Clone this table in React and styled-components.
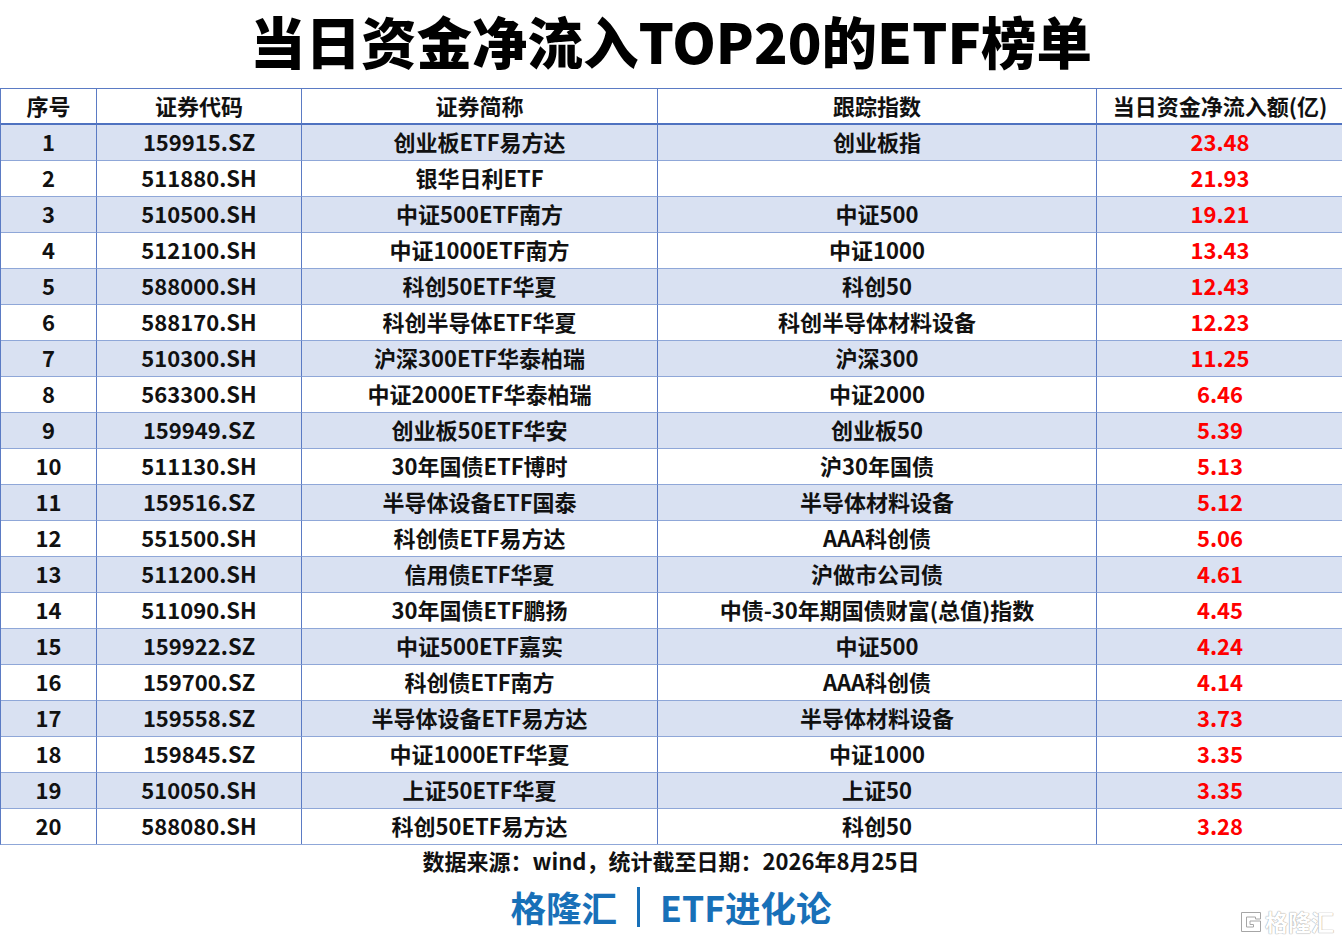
import React from "react";
import styled, { createGlobalStyle } from "styled-components";

const Global = createGlobalStyle`
  html, body { margin: 0; padding: 0; background: #ffffff; }
  body { font-family: "Noto Sans CJK SC", "Noto Sans", sans-serif; }
`;

const Page = styled.div`
  width: 1342px;
  height: 941px;
  background: #fff;
  display: flex;
  flex-direction: column;
  position: relative;
  overflow: hidden;
`;

const Title = styled.h1`
  margin: 0;
  height: 88px;
  padding-bottom: 6px;
  box-sizing: border-box;
  display: flex;
  align-items: center;
  justify-content: center;
  font-family: "Noto Sans CJK SC", sans-serif;
  font-weight: 900;
  font-size: 55.5px;
  line-height: 1;
  color: #000;
`;

const Table = styled.div`
  display: grid;
  grid-template-columns: 95px 205px 356px 439px 247px;
  border-top: 1.5px solid #5b7bc4;
  border-left: 1px solid #5b7bc4;
  border-right: 1px solid #5b7bc4;
  border-bottom: 1px solid #8fa7d8;
  box-sizing: border-box;
  width: 1342px;
`;

const HeadCell = styled.div`
  height: 36px;
  padding-bottom: 3px;
  box-sizing: border-box;
  display: flex;
  align-items: center;
  justify-content: center;
  font-size: 22px;
  font-weight: 700;
  line-height: 1;
  color: #111;
  border-bottom: 2px solid #4f72c0;
  border-left: ${p => (p.$first ? "none" : "1px solid #5b7bc4")};
  background: #fff;
`;

const Cell = styled.div`
  height: ${p => (p.$topless ? "35px" : "36px")};
  padding-bottom: 3px;
  box-sizing: border-box;
  display: flex;
  align-items: center;
  justify-content: center;
  font-size: 22px;
  font-weight: 700;
  line-height: 1;
  color: ${p => (p.$red ? "#ff0000" : "#111")};
  background: ${p => (p.$alt ? "#d9e1f2" : "#ffffff")};
  border-top: ${p => (p.$topless ? "none" : "1px solid #8fa7d8")};
  border-left: ${p => (p.$first ? "none" : "1px solid #5b7bc4")};
  white-space: nowrap;
`;

const Source = styled.div`
  height: 34px;
  padding-bottom: 4px;
  box-sizing: border-box;
  display: flex;
  align-items: center;
  justify-content: center;
  font-size: 22px;
  font-weight: 700;
  line-height: 1;
  color: #111;
`;

const Brand = styled.div`
  display: flex;
  align-items: center;
  justify-content: center;
  gap: 14px;
  height: 56px;
  font-size: 35.5px;
  font-weight: 700;
  line-height: 1;
  color: #1870b8;
`;

const BrandBar = styled.span`
  display: inline-block;
  width: 3px;
  height: 40px;
  background: #1870b8;
  margin: 0 6px;
`;

const Watermark = styled.div`
  position: absolute;
  right: 8px;
  bottom: 8px;
  display: flex;
  align-items: center;
  gap: 3px;
  font-size: 23px;
  font-weight: 700;
  line-height: 1;
  color: #ffffff;
  text-shadow: 0 0 1px #a0a0a0, 0 0 1px #a0a0a0;
`;

const rows = [
  ["1", "159915.SZ", "创业板ETF易方达", "创业板指", "23.48"],
  ["2", "511880.SH", "银华日利ETF", "", "21.93"],
  ["3", "510500.SH", "中证500ETF南方", "中证500", "19.21"],
  ["4", "512100.SH", "中证1000ETF南方", "中证1000", "13.43"],
  ["5", "588000.SH", "科创50ETF华夏", "科创50", "12.43"],
  ["6", "588170.SH", "科创半导体ETF华夏", "科创半导体材料设备", "12.23"],
  ["7", "510300.SH", "沪深300ETF华泰柏瑞", "沪深300", "11.25"],
  ["8", "563300.SH", "中证2000ETF华泰柏瑞", "中证2000", "6.46"],
  ["9", "159949.SZ", "创业板50ETF华安", "创业板50", "5.39"],
  ["10", "511130.SH", "30年国债ETF博时", "沪30年国债", "5.13"],
  ["11", "159516.SZ", "半导体设备ETF国泰", "半导体材料设备", "5.12"],
  ["12", "551500.SH", "科创债ETF易方达", "AAA科创债", "5.06"],
  ["13", "511200.SH", "信用债ETF华夏", "沪做市公司债", "4.61"],
  ["14", "511090.SH", "30年国债ETF鹏扬", "中债-30年期国债财富(总值)指数", "4.45"],
  ["15", "159922.SZ", "中证500ETF嘉实", "中证500", "4.24"],
  ["16", "159700.SZ", "科创债ETF南方", "AAA科创债", "4.14"],
  ["17", "159558.SZ", "半导体设备ETF易方达", "半导体材料设备", "3.73"],
  ["18", "159845.SZ", "中证1000ETF华夏", "中证1000", "3.35"],
  ["19", "510050.SH", "上证50ETF华夏", "上证50", "3.35"],
  ["20", "588080.SH", "科创50ETF易方达", "科创50", "3.28"],
];

const headers = ["序号", "证券代码", "证券简称", "跟踪指数", "当日资金净流入额(亿)"];

function GLogo() {
  return (
    <svg width="22" height="22" viewBox="0 0 22 22">
      <path
        d="M1.5 1.5 H20.5 V8 H15.5 V6 H6.5 V16 H13.5 V13.5 H10 V10 H20.5 V20.5 H1.5 Z"
        fill="#fff"
        stroke="#a6a6a6"
        strokeWidth="1"
      />
    </svg>
  );
}

export default function App() {
  return (
    <>
      <Global />
      <Page>
        <Title>当日资金净流入TOP20的ETF榜单</Title>
        <Table>
          {headers.map((h, i) => (
            <HeadCell key={h} $first={i === 0}>{h}</HeadCell>
          ))}
          {rows.map((r, ri) =>
            r.map((c, ci) => (
              <Cell
                key={ri + "-" + ci}
                $first={ci === 0}
                $alt={ri % 2 === 0}
                $topless={ri === 0}
                $red={ci === 4}
              >
                {c}
              </Cell>
            ))
          )}
        </Table>
        <Source>数据来源：wind，统计截至日期：2026年8月25日</Source>
        <Brand>
          <span>格隆汇</span>
          <BrandBar />
          <span>ETF进化论</span>
        </Brand>
        <Watermark>
          <GLogo />
          <span>格隆汇</span>
        </Watermark>
      </Page>
    </>
  );
}
